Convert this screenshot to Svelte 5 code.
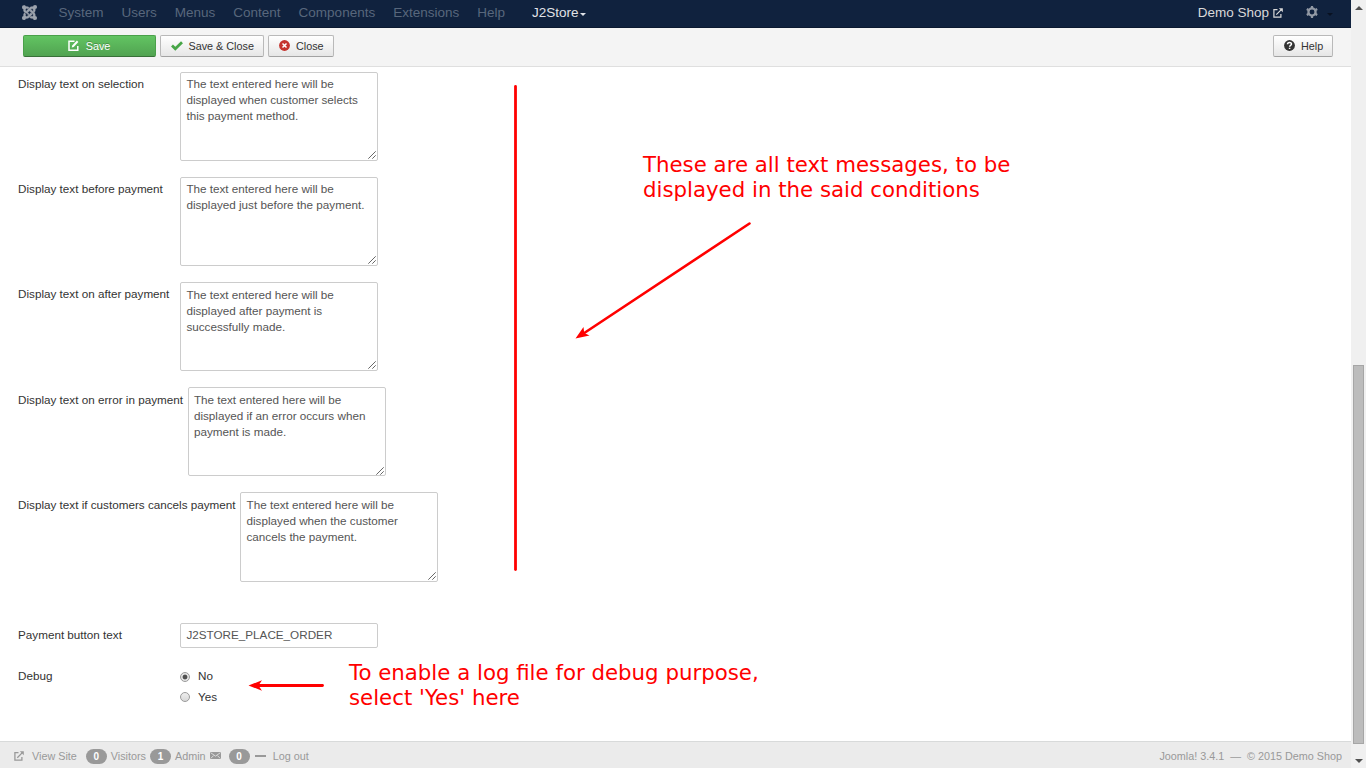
<script>
  const menus = ['System', 'Users', 'Menus', 'Content', 'Components', 'Extensions', 'Help'];
  const fields = [
    { label: 'Display text on selection', text: 'The text entered here will be displayed when customer selects this payment method.' },
    { label: 'Display text before payment', text: 'The text entered here will be displayed just before the payment.' },
    { label: 'Display text on after payment', text: 'The text entered here will be displayed after payment is successfully made.' },
    { label: 'Display text on error in payment', text: 'The text entered here will be displayed if an error occurs when payment is made.' },
    { label: 'Display text if customers cancels payment', text: 'The text entered here will be displayed when the customer cancels the payment.' }
  ];
</script>

<div class="page">
  <div class="window">
    <nav class="navbar">
      <svg class="logo" viewBox="0 0 24 24" width="15" height="15"><path fill="currentColor" stroke="currentColor" stroke-width=".4" d="M16.72 14.76L14.22 17.26l-2.37 2.37-.46.47c-1.37 1.36-3.3 1.83-5.05 1.4-.33 1.42-1.6 2.49-3.13 2.49C1.44 23.98 0 22.55 0 20.77c0-1.52 1.06-2.79 2.47-3.12-.45-1.76.02-3.7 1.4-5.08l.18-.18 2.37 2.37-.19.18c-.77.78-.77 2.02 0 2.79.77.78 2.02.78 2.79 0l.46-.47 2.37-2.37 2.5-2.5zM17.64 21.41c-1.82.56-3.88.12-5.33-1.32l-.18-.18 2.37-2.37.18.18c.77.77 2.01.77 2.78 0s.77-2.01 0-2.78l-.47-.47-2.36-2.37-2.5-2.5 2.37-2.37 2.5 2.5 2.36 2.37.47.47c1.36 1.36 1.84 3.28 1.41 5.02 1.56.22 2.76 1.56 2.76 3.18 0 1.78-1.44 3.21-3.21 3.21-1.55 0-2.85-1.1-3.14-2.57zM6.98 9.46L9.48 6.96l2.37-2.37.46-.46c1.44-1.44 3.53-1.88 5.35-1.31C17.88 1.27 19.21.11 20.8.11 22.58.11 24 1.54 24 3.31c0 1.65-1.24 3.01-2.84 3.2.57 1.82.12 3.88-1.32 5.33l-.18.18-2.37-2.37.18-.18c.77-.77.77-2.01 0-2.78-.76-.77-2.01-.77-2.78 0l-.46.47-2.37 2.37-2.5 2.5zM9.2 14.38L3.75 11.5C2.37 10.19 1.9 8.27 2.34 6.51 1 6.14 0 4.89 0 3.42 0 1.65 1.44.21 3.21.21 4.68.21 5.91 1.17 6.3 2.5c1.79-.46 3.75 0 5.15 1.4l.18.18-2.37 2.37-.18-.18c-.77-.77-2.02-.77-2.79 0s-.77 2.01 0 2.78l5.34 5.35-2.37 2.37z"/></svg>
      {#each menus as m}<a class="menu">{m}</a>{/each}
      <a class="menu active">J2Store<i class="caret"></i></a>
      <span class="spacer"></span>
      <a class="shop">Demo Shop
        <svg viewBox="0 0 10 10" width="10" height="10" fill="none" stroke="currentColor" stroke-width="1.2"><path d="M4.5 1.7H.9v7.4h7V6M3.3 6.7L8.6 1.4"/><path d="M5.8.2H9.8V4.200z" fill="currentColor" stroke="none"/></svg>
      </a>
      <svg class="gear" viewBox="0 0 12 12" width="12" height="12"><circle cx="6" cy="6" r="3.6" fill="none" stroke="currentColor" stroke-width="2.3"/><path stroke="currentColor" stroke-width="2.2" d="M6 0v2M6 10v2M.8 3l1.700 1M9.500 8l1.700 1M.8 9l1.700-1M9.500 4l1.700-1"/></svg>
      <i class="caret dark"></i>
    </nav>

    <div class="toolbar">
      <button class="btn save">
        <svg viewBox="0 0 11 11" width="11" height="11" fill="none" stroke="currentColor" stroke-width="1.5"><path d="M6.500 1.300H1v8.900h8.800V6"/><path d="M3.700 7.500l.5-2L8.900.5l1.500 1.500-4.700 5z" fill="currentColor" stroke="none"/></svg>
        <span>Save</span>
      </button>
      <button class="btn apply">
        <svg viewBox="0 0 12 10" width="12" height="10" fill="none" stroke="#46a546" stroke-width="2.800"><path d="M1 4.600l3.300 3.100L11 1.300"/></svg>
        <span>Save &amp; Close</span>
      </button>
      <button class="btn close">
        <svg viewBox="0 0 11 11" width="11" height="11"><circle cx="5.500" cy="5.500" r="5.400" fill="#c5342e"/><path stroke="#fff" stroke-width="1.500" d="M3.500 3.500l4 4m0-4l-4 4"/></svg>
        <span>Close</span>
      </button>
      <span class="spacer"></span>
      <button class="btn help">
        <svg viewBox="0 0 11 11" width="11" height="11"><circle cx="5.500" cy="5.500" r="5.400" fill="#333"/><path fill="none" stroke="#fff" stroke-width="1.500" d="M3.500 4.200c0-2.300 4-2.300 4-.1 0 1.400-1.900 1.200-1.900 2.700M5.600 7.700v1.400"/></svg>
        <span>Help</span>
      </button>
    </div>

    <main>
      {#each fields as f}
        <div class="row">
          <label>{f.label}</label>
          <div class="area">
            <textarea value={f.text} spellcheck="false"></textarea>
            <svg class="grip" viewBox="0 0 8 8" width="8" height="8"><path stroke="#555" stroke-width=".9" d="M.3 7.700L7.700.3M4.300 7.700l3.400-3.400"/></svg>
          </div>
        </div>
      {/each}
      <div class="row single">
        <label>Payment button text</label>
        <input type="text" value="J2STORE_PLACE_ORDER" spellcheck="false" />
      </div>
      <div class="row debug">
        <label>Debug</label>
        <div class="radios">
          <div class="option"><i class="radio on"></i>No</div>
          <div class="option"><i class="radio"></i>Yes</div>
        </div>
      </div>

      <svg class="marks" viewBox="0 67 1351 674" width="1351" height="674" stroke="#f00" fill="#f00" stroke-linecap="round">
        <path stroke-width="2.800" d="M515.500 86.500v483"/>
        <path stroke-width="2.600" d="M749.500 223.500L582 334.500"/>
        <path stroke="none" d="M575.500 338.500L583.500 327l.7 6 5.300 2.500z"/>
        <path stroke-width="2.800" d="M322.500 685.500H257"/>
        <path stroke="none" d="M248.500 685.500l13.500-5.200-3.500 5.200 3.500 5.200z"/>
      </svg>
      <p class="note first">These are all text messages, to be<br />displayed in the said conditions</p>
      <p class="note second">To enable a log file for debug purpose,<br />select 'Yes' here</p>
    </main>

    <footer>
      <svg viewBox="0 0 10 10" width="10" height="10" fill="none" stroke="currentColor" stroke-width="1.300"><path d="M4.500 1.700H.9v7.400h7V6M3.300 6.700L8.600 1.400"/><path d="M5.800.2H9.800V4.200z" fill="currentColor" stroke="none"/></svg>
      <span class="view">View Site</span>
      <b class="badge">0</b><span class="visitors">Visitors</span>
      <b class="badge">1</b><span class="admin">Admin</span>
      <svg class="mail" viewBox="0 0 11 7" width="11" height="7"><path fill="currentColor" d="M0 0h11v7H0z"/><path fill="none" stroke="#ebebeb" stroke-width=".8" d="M.5.6l5 3.500 5-3.500M.7 6.500l3-3M10.300 6.500l-3-3"/></svg>
      <b class="badge">0</b>
      <i class="dash"></i>
      <span>Log out</span>
      <span class="spacer"></span>
      <span class="version">Joomla! 3.4.1 &nbsp;—&nbsp; © 2015 Demo Shop</span>
    </footer>
  </div>

  <div class="scrollbar">
    <i class="up"></i>
    <div class="thumb"></div>
    <i class="down"></i>
  </div>
</div>

<style>
  :global(body) { overflow: hidden; background: #fff; }
  * { box-sizing: border-box; }
  .page { display: flex; width: 1366px; height: 768px; font: 11.7px/16.2px "Liberation Sans", Arial, sans-serif; color: #333; }
  .window { display: flex; flex-direction: column; width: 1351px; }
  svg { flex: none; display: block; }
  .spacer { flex: 1; }

  .navbar { display: flex; align-items: center; height: 28px; padding: 0 18px 1px 22px; background: #10223e; border-bottom: 1px solid #0b1930; font-size: 13.5px; line-height: 18px; color: #58677c; }
  .logo { color: #9ca3ad; margin: 0 12.500px 1px 0; }
  .menu { padding: 0 9px; white-space: nowrap; }
  .active { display: flex; align-items: center; margin-left: 9px; color: #e0e3e8; }
  .caret { border: 3px solid transparent; border-top-color: currentColor; border-bottom: 0; margin: 3px 0 0 1px; }
  .shop { display: flex; align-items: center; gap: 4px; color: #d9d9d9; }
  .gear { color: #9299a4; margin: 0 0 2px 23px; }
  .dark { color: #081121; margin: 3px 0 0 9px; }

  .toolbar { display: flex; align-items: flex-start; height: 39px; padding: 7px 18px 0 23px; background: #f4f4f4; border-bottom: 1px solid #dfdfdf; gap: 4px; }
  .btn { display: flex; align-items: center; height: 22px; padding: 0 9px 0 10px; font: 10.800px "Liberation Sans", Arial, sans-serif; color: #333; background: linear-gradient(#fff, #e6e6e6); border: 1px solid #b9b9b9; border-bottom-color: #a2a2a2; border-radius: 2px; white-space: nowrap; }
  .btn span { margin-left: 6px; }
  .btn svg { margin-bottom: 1px; }
  .save { width: 133px; justify-content: center; color: #fff; background: linear-gradient(#62c462, #51a351); border-color: #4aa04a #4aa04a #387038; text-shadow: 0 -1px 0 rgba(0,0,0,.25); }
  .save svg { margin-left: -2px; }
  .save span { margin-left: 7px; }
  .apply { width: 104px; }
  .apply span { margin-left: 5.500px; }
  .close { width: 66px; }
  .help { width: 60px; }

  main { position: relative; flex: 1; padding: 4.500px 18px 0; }
  .row { display: flex; height: 89px; margin-bottom: 16.230px; }
  label { min-width: 162px; padding: 4.500px 4.500px 0 0; white-space: nowrap; }
  .area { position: relative; width: 198px; height: 89px; }
  textarea, input { display: block; width: 198px; height: 89px; margin: 0; padding: 3.600px 5.400px; font: 11.7px/16px "Liberation Sans", Arial, sans-serif; color: #555; background: #fff; border: 1px solid #ccc; border-radius: 2px; resize: none; overflow: hidden; outline: none; }
  .row:nth-child(5) textarea { height: 90px; }
  .grip { position: absolute; right: 2px; bottom: 1.500px; }
  .single { height: 25px; margin-top: 41.500px; margin-bottom: 16px; }
  input { height: 25px; padding: 3px 5.400px 4px; }
  .single label { padding-top: 4px; }
  .debug { height: 50px; margin: 0; }
  .radios { padding-top: 4px; }
  .option { display: flex; align-items: center; height: 20.700px; padding-bottom: 4px; }
  .radio { width: 10px; height: 10px; margin: 1px 8px 0 0; border: 1px solid #9b9b9b; border-radius: 50%; background: linear-gradient(#eee, #d8d8d8); }
  .on { background: radial-gradient(circle, #505050 0 2px, #e4e4e4 2.800px); }

  .marks { position: absolute; left: 0; top: 0; }
  .note { position: absolute; margin: 0; font: 21.300px/25px "DejaVu Sans", sans-serif; color: #f00; white-space: nowrap; }
  .first { left: 643px; top: 85px; }
  .second { left: 349px; top: 593px; }

  footer { display: flex; align-items: center; height: 27px; padding: 2px 9px 0 14px; background: #ebebeb; border-top: 1px solid #d8dada; font-size: 10.800px; color: #999; white-space: nowrap; }
  .view { margin: 0 9px 0 8px; }
  .badge { width: 21px; height: 15px; border-radius: 8px; background: #999; color: #fff; font-size: 10px; line-height: 15px; text-align: center; }
  .visitors { margin: 0 4px; }
  .admin { margin: 0 5px 0 4px; }
  .mail { margin: 0 8px 1px -1px; }
  .dash { width: 11px; height: 2px; background: #999; margin: 0 7px 1px 5px; }

  .scrollbar { width: 15px; background: #f0f0f0; display: flex; flex-direction: column; align-items: center; }
  .up, .down { border: 4px solid transparent; }
  .up { border-top: 0; border-bottom-color: #505050; margin-top: 6px; }
  .down { border-bottom: 0; border-top-color: #505050; margin-top: 15px; }
  .thumb { width: 11px; height: 379px; margin-top: 355px; background: #bcbcbc; border: 1px solid #a6a6a6; }
</style>
